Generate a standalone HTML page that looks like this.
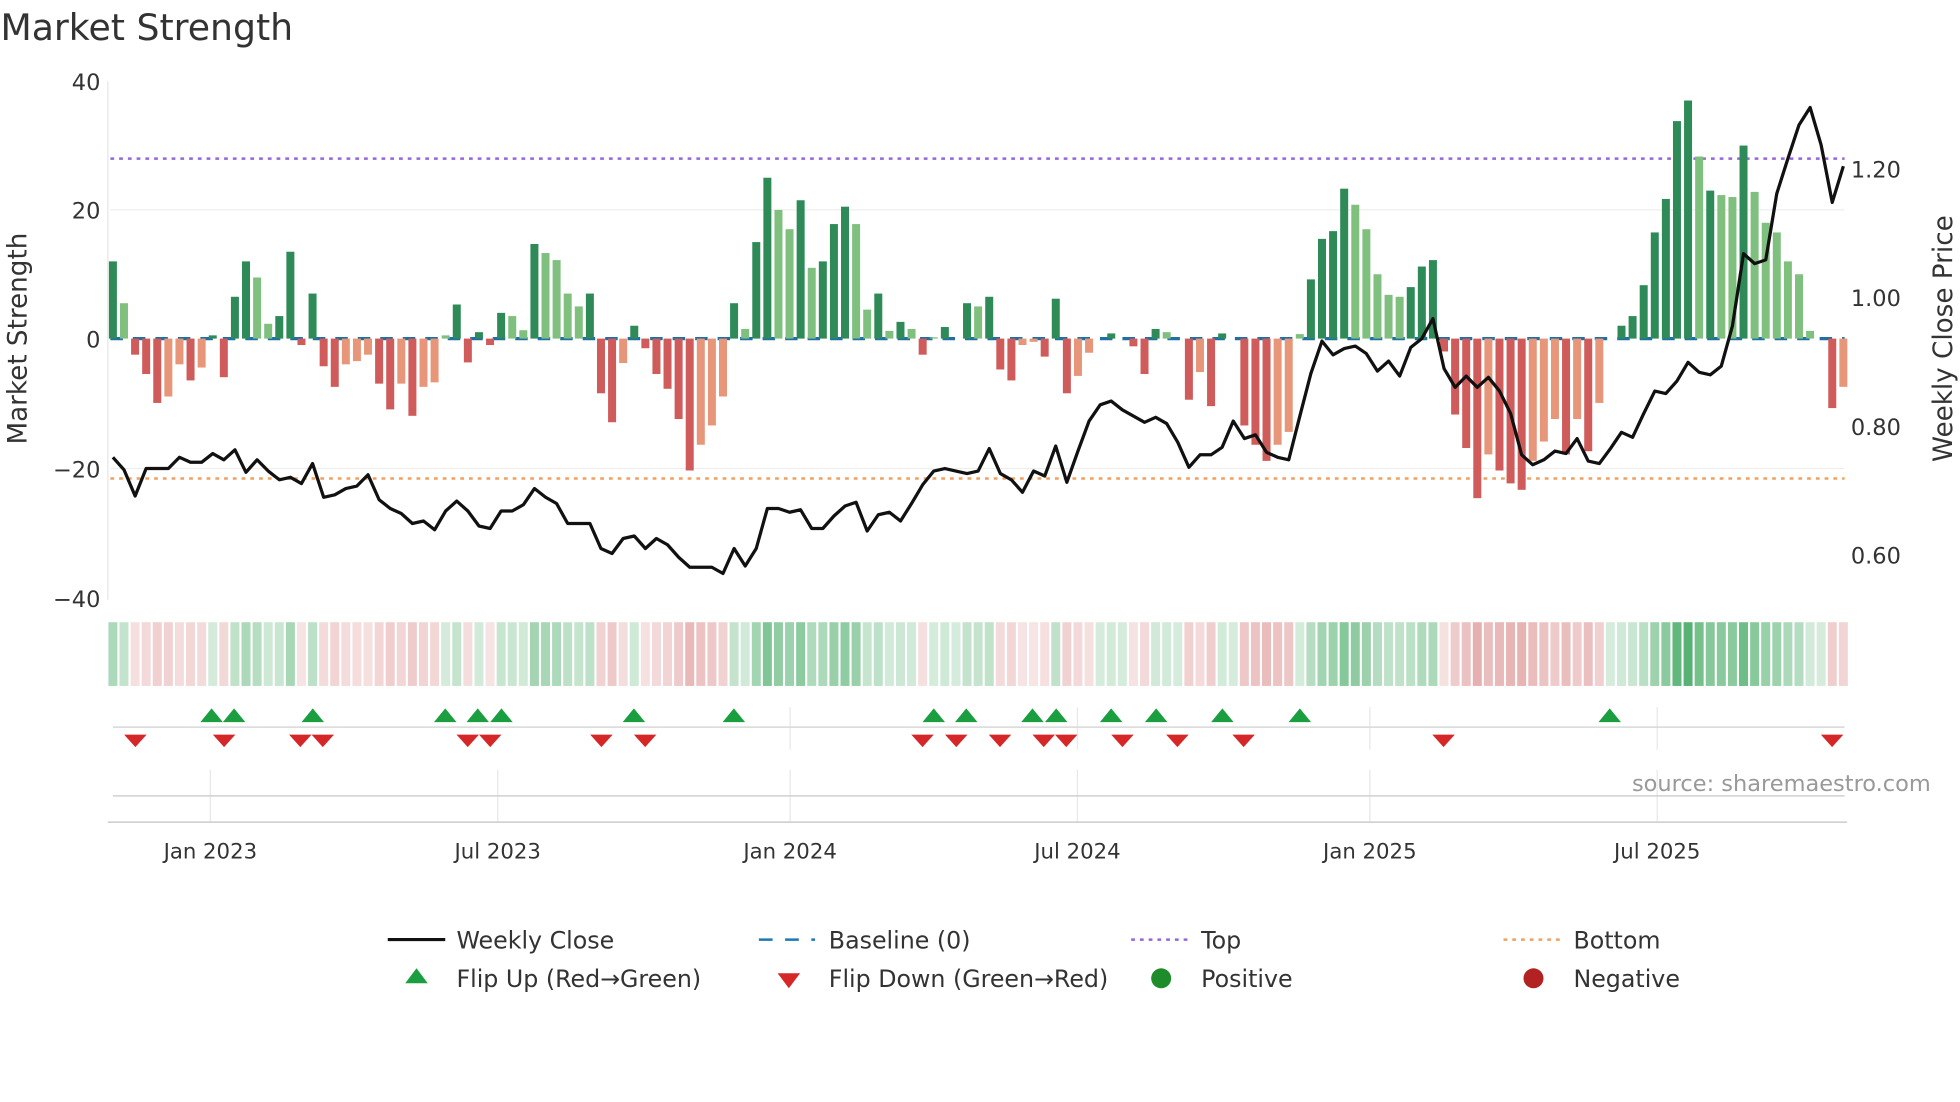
<!DOCTYPE html>
<html><head><meta charset="utf-8"><style>
html,body{margin:0;padding:0;background:#fff;}
svg{display:block;font-family:"DejaVu Sans","Liberation Sans",sans-serif;}
</style></head><body>
<svg id="s" width="1960" height="1102" viewBox="0 0 1568 882" xmlns="http://www.w3.org/2000/svg">
<rect width="1568" height="882" fill="#fff"/>
<text x="0" y="32" font-size="29" fill="#333">Market Strength</text>
<line x1="86" y1="65" x2="86" y2="480" stroke="#e6e6e6" stroke-width="1"/>
<line x1="88" y1="168" x2="1476" y2="168" stroke="#eeeeee" stroke-width="1"/>
<line x1="88" y1="375" x2="1476" y2="375" stroke="#eeeeee" stroke-width="1"/>
<g font-size="18" fill="#333" text-anchor="end">
<text x="80" y="72">40</text><text x="80" y="175">20</text><text x="80" y="278">0</text>
<text x="80" y="382">−20</text><text x="80" y="486">−40</text></g>
<g font-size="18" fill="#333">
<text x="1481" y="142">1.20</text><text x="1481" y="245">1.00</text>
<text x="1481" y="348">0.80</text><text x="1481" y="451">0.60</text></g>
<text transform="translate(21,271) rotate(-90)" font-size="21" fill="#333" text-anchor="middle">Market Strength</text>
<text transform="translate(1562,271) rotate(-90)" font-size="21" fill="#333" text-anchor="middle">Weekly Close Price</text>
<line x1="88" y1="127" x2="1476" y2="127" stroke="#9467d9" stroke-width="2" stroke-dasharray="3,4"/>
<line x1="88" y1="383" x2="1476" y2="383" stroke="#f0a060" stroke-width="2" stroke-dasharray="3,4"/>
<line x1="88" y1="271" x2="1476" y2="271" stroke="#1f6fa4" stroke-width="2.6" stroke-dasharray="10,8"/>
<g id="bars"></g><g id="heat"></g>
<polyline id="price" fill="none" stroke="#111" stroke-width="2.6" stroke-linejoin="round"/>
<g stroke="#e8e8e8" stroke-width="1">
<line x1="632" y1="566" x2="632" y2="600"/><line x1="862" y1="566" x2="862" y2="600"/>
<line x1="1096" y1="566" x2="1096" y2="600"/><line x1="1326" y1="566" x2="1326" y2="600"/>
<line x1="168" y1="616" x2="168" y2="658"/><line x1="398" y1="616" x2="398" y2="658"/>
<line x1="632" y1="616" x2="632" y2="658"/><line x1="862" y1="616" x2="862" y2="658"/>
<line x1="1096" y1="616" x2="1096" y2="658"/><line x1="1326" y1="616" x2="1326" y2="658"/></g>
<line x1="90" y1="582" x2="1476" y2="582" stroke="#d8d8d8" stroke-width="1.2"/>
<line x1="90" y1="637" x2="1476" y2="637" stroke="#d0d0d0" stroke-width="1.2"/>
<line x1="86" y1="658" x2="1478" y2="658" stroke="#cccccc" stroke-width="1.2"/>
<g id="mk"></g>
<text x="1545" y="633" font-size="18" fill="#999" text-anchor="end">source: sharemaestro.com</text>
<g font-size="17" fill="#333" text-anchor="middle">
<text x="168" y="687">Jan 2023</text><text x="398" y="687">Jul 2023</text><text x="632" y="687">Jan 2024</text>
<text x="862" y="687">Jul 2024</text><text x="1096" y="687">Jan 2025</text><text x="1326" y="687">Jul 2025</text></g>
<g font-size="19" fill="#333">
<line x1="310" y1="752" x2="356" y2="752" stroke="#111" stroke-width="2.5"/><text x="365" y="759">Weekly Close</text>
<line x1="607" y1="752" x2="652" y2="752" stroke="#1f77b4" stroke-width="2" stroke-dasharray="11,10"/><text x="663" y="759">Baseline (0)</text>
<line x1="905" y1="752" x2="950" y2="752" stroke="#9467d9" stroke-width="2" stroke-dasharray="3,4"/><text x="961" y="759">Top</text>
<line x1="1203" y1="752" x2="1248" y2="752" stroke="#f0a060" stroke-width="2" stroke-dasharray="3,4"/><text x="1259" y="759">Bottom</text>
<polygon points="324,787 333,775 342,787" fill="#1a9e3f"/><text x="365" y="790">Flip Up (Red→Green)</text>
<polygon points="622,779 640,779 631,791" fill="#d62728"/><text x="663" y="790">Flip Down (Green→Red)</text>
<circle cx="929" cy="783" r="8" fill="#1e8c2b"/><text x="961" y="790">Positive</text>
<circle cx="1227" cy="783" r="8" fill="#b22222"/><text x="1259" y="790">Negative</text></g>
</svg>
<script>
var ns="http://www.w3.org/2000/svg";
var B=[[12,1],[5.5,0],[-2.5,1],[-5.5,1],[-10,1],[-9,0],[-4,0],[-6.5,1],[-4.5,0],[0.5,1],[-6,1],[6.5,1],[12,1],[9.5,0],[2.3,0],[3.5,1],[13.5,1],[-1,1],[7,1],[-4.3,1],[-7.5,1],[-4,0],[-3.5,0],[-2.5,0],[-7,1],[-11,1],[-7,0],[-12,1],[-7.5,0],[-6.8,0],[0.5,0],[5.3,1],[-3.7,1],[1,1],[-1,1],[4,1],[3.5,0],[1.3,0],[14.7,1],[13.3,0],[12.2,0],[7,0],[5,0],[7,1],[-8.5,1],[-13,1],[-3.8,0],[2,1],[-1.5,1],[-5.5,1],[-7.8,1],[-12.5,1],[-20.5,1],[-16.5,0],[-13.5,0],[-9,0],[5.5,1],[1.5,0],[15,1],[25,1],[20,0],[17,0],[21.5,1],[11,0],[12,1],[17.8,1],[20.5,1],[17.8,0],[4.5,0],[7,1],[1.2,0],[2.6,1],[1.5,0],[-2.5,1],[0.2,0],[1.8,1],[0,0],[5.5,1],[5,0],[6.5,1],[-4.8,1],[-6.5,1],[-1,0],[-0.5,0],[-2.8,1],[6.2,1],[-8.5,1],[-5.8,0],[-2.2,0],[0,0],[0.8,1],[0,0],[-1.2,1],[-5.5,1],[1.5,1],[1,0],[0,0],[-9.5,1],[-5.2,0],[-10.5,1],[0.8,1],[0,0],[-13.5,1],[-16.5,1],[-19,1],[-16.5,0],[-14.5,0],[0.7,0],[9.2,1],[15.5,1],[16.7,1],[23.3,1],[20.8,0],[17,0],[10,0],[6.8,0],[6.5,0],[8,1],[11.2,1],[12.2,1],[-2,1],[-11.8,1],[-17,1],[-24.8,1],[-18,0],[-20.5,1],[-22.5,1],[-23.5,1],[-19,0],[-16,0],[-12.5,0],[-18,1],[-12.5,0],[-17.5,1],[-10,0],[0,0],[2,1],[3.5,1],[8.3,1],[16.5,1],[21.7,1],[33.8,1],[37,1],[28.3,0],[23,1],[22.3,0],[22,0],[30,1],[22.8,0],[18,0],[16.5,0],[12,0],[10,0],[1.2,0],[0,0],[-10.8,1],[-7.5,0]];
var P=[366,376,397,375,375,375,366,370,370,363,368,360,378,368,377,384,382,387,371,398,396,391,389,380,400,407,411,419,417,424,409,401,409,421,423,409,409,404,391,398,403,419,419,419,439,443,431,429,439,431,436,446,454,454,454,459,439,453,439,407,407,410,408,423,423,413,405,402,425,412,410,417,403,388,377,375,377,379,377,359,379,384,394,377,381,357,386,361,337,324,321,328,333,338,334,339,354,374,364,364,358,337,351,348,362,366,368,333,299,273,284,279,277,283,297,289,301,278,271,255,295,310,301,310,302,313,331,364,372,368,361,363,351,369,371,359,346,350,331,313,315,305,290,298,300,293,261,203,211,208,155,127,100,86,116,162,133];
var n=B.length, x0=90, dx=(1475-90)/(n-1);
var bars=document.getElementById("bars"),heat=document.getElementById("heat");
function el(t,a,p){var e=document.createElementNS(ns,t);for(var k in a)e.setAttribute(k,a[k]);p.appendChild(e);return e;}
for(var i=0;i<n;i++){var v=B[i][0],d=B[i][1],x=x0+i*dx,h=Math.abs(v)*5.15;
 var c=v>=0?(d?"#2e8b57":"#80c07e"):(d?"#cf5b5b":"#e8967a");
 if(h>0.5)el("rect",{x:x-3.2,y:v>=0?271-h:271,width:6.4,height:h,fill:c},bars);
 var a=0.25+Math.min(Math.abs(v),37)/37*0.75;
 el("rect",{x:x-3.6,y:498,width:7.2,height:51,fill:v>=0?"#3aa55a":"#c95050","fill-opacity":(v>=0?a*0.85:a*0.6)},heat);}
var pts=[];for(var i=0;i<P.length;i++)pts.push((x0+i*(1475-90)/(P.length-1)).toFixed(1)+","+P[i]);
document.getElementById("price").setAttribute("points",pts.join(" "));
var mk=document.getElementById("mk");
[169,187,250,356,382,401,507,587,747,773,826,845,889,925,978,1040,1288].forEach(function(x){el("polygon",{points:(x-9)+",578 "+x+",567 "+(x+9)+",578",fill:"#1a9e3f"},mk);});
[108,179,240,258,374,392,481,516,738,765,800,835,853,898,942,995,1155,1466].forEach(function(x){el("polygon",{points:(x-9)+",588 "+(x+9)+",588 "+x+",598",fill:"#d62728"},mk);});
</script>
</body></html>
